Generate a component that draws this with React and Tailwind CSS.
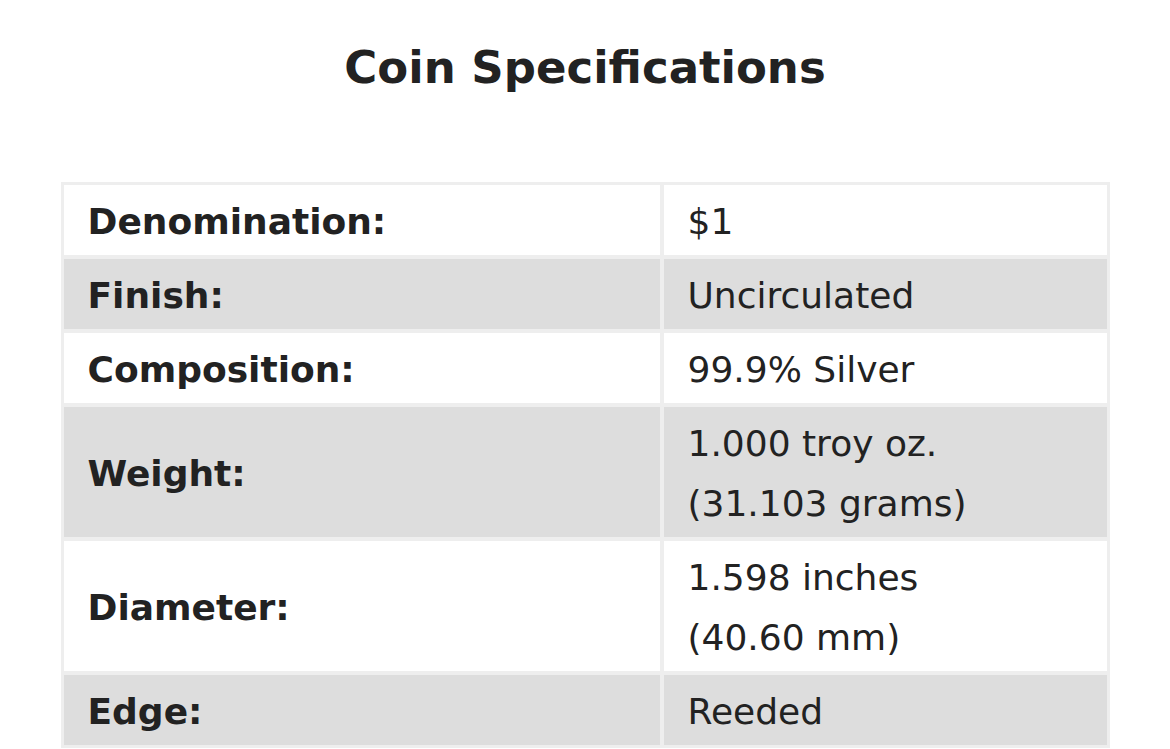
import React from "react";

const rows = [
  { label: "Denomination:", value: ["$1"], shade: false },
  { label: "Finish:", value: ["Uncirculated"], shade: true },
  { label: "Composition:", value: ["99.9% Silver"], shade: false },
  { label: "Weight:", value: ["1.000 troy oz.", "(31.103 grams)"], shade: true },
  { label: "Diameter:", value: ["1.598 inches", "(40.60 mm)"], shade: false },
  { label: "Edge:", value: ["Reeded"], shade: true },
];

const App = () => {
  return (
    <div className="min-h-[749px] bg-white font-['DejaVu_Sans',Verdana,sans-serif] text-[#222]">
      <div className="pt-[38px] text-center text-[45px] font-bold leading-[60px]">
        Coin Specifications
      </div>
      <div className="mx-auto mt-[84px] w-[1049px] border-[3px] border-[#eeeeee] bg-[#eeeeee]">
        <div className="grid grid-cols-[596px_1fr] gap-[4px]">
          {rows.map((row) => (
            <React.Fragment key={row.label}>
              <div
                className={`flex items-center pt-[7px] pb-[3px] pl-[24px] text-[36px] font-bold leading-[60px] ${
                  row.shade ? "bg-[#dddddd]" : "bg-white"
                }`}
              >
                {row.label}
              </div>
              <div
                className={`flex flex-col justify-center pt-[7px] pb-[3px] pl-[24px] text-[36px] leading-[60px] ${
                  row.shade ? "bg-[#dddddd]" : "bg-white"
                }`}
              >
                {row.value.map((v) => (
                  <div key={v}>{v}</div>
                ))}
              </div>
            </React.Fragment>
          ))}
        </div>
      </div>
    </div>
  );
};

export default App;
